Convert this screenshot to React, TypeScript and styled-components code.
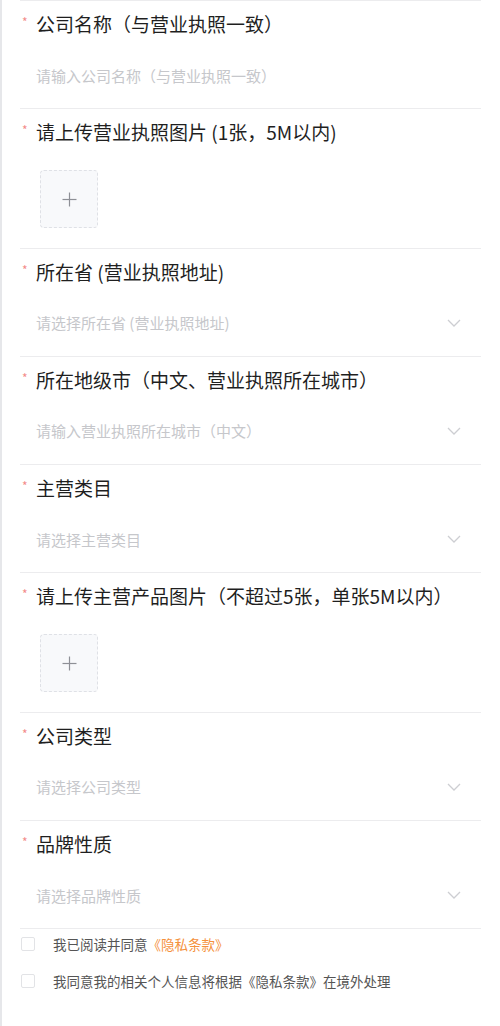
import React from "react";
import styled, { createGlobalStyle } from "styled-components";

const GlobalStyle = createGlobalStyle`
  html, body {
    margin: 0;
    padding: 0;
    background: #ffffff;
  }
  body {
    font-family: "Noto Sans CJK SC", "Noto Sans", sans-serif;
  }
`;

const Page = styled.div`
  box-sizing: border-box;
  min-height: 1026px;
  width: 500px;
  border-left: 2px solid #e6e7ea;
  padding: 0 19px 0 18px;
`;

const Field = styled.div`
  border-top: 1px solid #ececee;
  padding: 11px 0 13.3px;
`;

const Label = styled.div`
  display: flex;
  align-items: flex-start;
  font-size: 19px;
  line-height: 24px;
  color: #1f1f1f;
  white-space: nowrap;
`;

const Star = styled.span`
  flex: 0 0 16px;
  padding: 3px 0 0 2px;
  box-sizing: border-box;
  font-size: 12px;
  line-height: 14px;
  color: #f38b8b;
`;

const InputRow = styled.div`
  margin-top: 19px;
  height: 40px;
  display: flex;
  align-items: center;
  justify-content: space-between;
  padding: 0 20px 0 16px;
`;

const Placeholder = styled.span`
  font-size: 15px;
  color: #c6c7cb;
  white-space: nowrap;
`;

const UploadWrap = styled.div`
  margin: 26px 0 6px 20px;
`;

const UploadBox = styled.div`
  box-sizing: border-box;
  width: 58px;
  height: 58px;
  border: 1px dashed #dfe1e6;
  border-radius: 4px;
  background: #f8f9fb;
  display: flex;
  align-items: center;
  justify-content: center;
`;

const Agreements = styled.div`
  border-top: 1px solid #ececee;
  padding-top: 5px;
  display: flex;
  flex-direction: column;
  gap: 17px;
`;

const CheckRow = styled.label`
  display: flex;
  align-items: center;
  height: 20px;
  font-size: 13.5px;
  color: #555555;
  white-space: nowrap;
`;

const Box = styled.span`
  box-sizing: border-box;
  width: 14px;
  height: 14px;
  margin: 0 18px 0 1px;
  border: 1px solid #e2e3e6;
  border-radius: 2px;
  background: #fff;
`;

const Link = styled.span`
  color: #f5913c;
`;

const Chevron = () => (
  <svg width="14" height="8" viewBox="0 0 14 8" fill="none">
    <polyline points="1,1 7,7 13,1" stroke="#cdced2" strokeWidth="1.3" />
  </svg>
);

const Plus = () => (
  <svg width="15" height="15" viewBox="0 0 15 15" fill="none">
    <line x1="7.5" y1="0.5" x2="7.5" y2="14.5" stroke="#8e9096" strokeWidth="1.2" />
    <line x1="0.5" y1="7.5" x2="14.5" y2="7.5" stroke="#8e9096" strokeWidth="1.2" />
  </svg>
);

type FieldProps = {
  label: string;
  placeholder?: string;
  select?: boolean;
  upload?: boolean;
};

const FormField = ({ label, placeholder, select, upload }: FieldProps) => (
  <Field>
    <Label>
      <Star>*</Star>
      {label}
    </Label>
    {upload ? (
      <UploadWrap>
        <UploadBox>
          <Plus />
        </UploadBox>
      </UploadWrap>
    ) : (
      <InputRow>
        <Placeholder>{placeholder}</Placeholder>
        {select ? <Chevron /> : null}
      </InputRow>
    )}
  </Field>
);

const fields: FieldProps[] = [
  { label: "公司名称（与营业执照一致）", placeholder: "请输入公司名称（与营业执照一致）" },
  { label: "请上传营业执照图片 (1张，5M以内)", upload: true },
  { label: "所在省 (营业执照地址)", placeholder: "请选择所在省 (营业执照地址)", select: true },
  { label: "所在地级市（中文、营业执照所在城市）", placeholder: "请输入营业执照所在城市（中文）", select: true },
  { label: "主营类目", placeholder: "请选择主营类目", select: true },
  { label: "请上传主营产品图片（不超过5张，单张5M以内）", upload: true },
  { label: "公司类型", placeholder: "请选择公司类型", select: true },
  { label: "品牌性质", placeholder: "请选择品牌性质", select: true },
];

export default function App() {
  return (
    <>
      <GlobalStyle />
      <Page>
        {fields.map((f) => (
          <FormField key={f.label} {...f} />
        ))}
        <Agreements>
          <CheckRow>
            <Box />
            我已阅读并同意<Link>《隐私条款》</Link>
          </CheckRow>
          <CheckRow>
            <Box />
            我同意我的相关个人信息将根据《隐私条款》在境外处理
          </CheckRow>
        </Agreements>
      </Page>
    </>
  );
}
